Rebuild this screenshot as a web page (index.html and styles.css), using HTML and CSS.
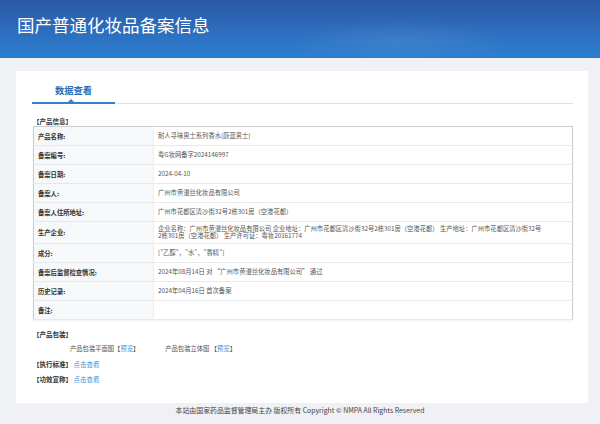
FILE: index.html
```html
<!DOCTYPE html>
<html lang="zh-CN">
<head>
    <meta charset="utf-8">
    <title>国产普通化妆品备案信息</title>
    <link rel="stylesheet" href="styles.css">
</head>
<body>
    <header class="top">
        <h1>国产普通化妆品备案信息</h1>
    </header>
    <main class="card">
        <div class="tabs">
            <span class="tab active">数据查看</span>
        </div>

        <div class="section-title">【产品信息】</div>
        <table class="info">
            <tr><th>产品名称:</th><td>耐人寻味男士系列香水(蔚蓝男士)</td></tr>
            <tr><th>备案编号:</th><td>粤G妆网备字2024146997</td></tr>
            <tr><th>备案日期:</th><td>2024-04-10</td></tr>
            <tr><th>备案人:</th><td>广州市黄漫丝化妆品有限公司</td></tr>
            <tr><th>备案人住所地址:</th><td>广州市花都区清沙街32号2栋301房（空港花都）</td></tr>
            <tr class="tall"><th>生产企业:</th><td>企业名称：广州市黄漫丝化妆品有限公司 企业地址：广州市花都区清沙街32号2栋301房（空港花都） 生产地址：广州市花都区清沙街32号2栋301房（空港花都） 生产许可证：粤妆20161774</td></tr>
            <tr><th>成分:</th><td>["乙醇"，"水"，"香精"]</td></tr>
            <tr><th>备案后监督检查情况:</th><td>2024年08月14日 对 “广州市黄漫丝化妆品有限公司” 通过</td></tr>
            <tr><th>历史记录:</th><td>2024年04月16日 首次备案</td></tr>
            <tr><th>备注:</th><td></td></tr>
        </table>

        <div class="section-title pack-title">【产品包装】</div>
        <div class="pack">
            <span>产品包装平面图【<a href="#">预览</a>】</span>
            <span>产品包装立体图 【<a href="#">预览</a>】</span>
        </div>
        <div class="line-item"><b>【执行标准】</b> <a href="#">点击查看</a></div>
        <div class="line-item"><b>【功效宣称】</b> <a href="#">点击查看</a></div>
    </main>
    <footer class="foot">本站由国家药品监督管理局主办 版权所有 Copyright © NMPA All Rights Reserved</footer>
</body>
</html>
```

FILE: styles.css
```css
body {
    margin: 0;
    background-color: #eff1f4;
    font-family: "Noto Sans CJK SC", "Noto Sans", sans-serif;
    color: #333;
}
a {
    color: #3a8fd8;
    text-decoration: none;
}

/* blue banner */
.top {
    height: 57px;
    border-bottom: 1px solid #2a78c8;
    background: radial-gradient(ellipse 160px 30px at 400px 40px, rgba(255,255,255,0.08), rgba(255,255,255,0) 70%),
                linear-gradient(#2b58a6, #2e7fd1);
}
.top h1 {
    margin: 0;
    padding-left: 17px;
    line-height: 50px;
    font-size: 17.5px;
    font-weight: normal;
    color: #fff;
}

/* white content card */
.card {
    margin: 13px 12px 0 16px;
    padding: 0 15px 0 17px;
    height: 332px;
    background-color: #fff;
    box-sizing: border-box;
}
.tabs {
    margin-left: -1px;
    padding-top: 13px;
    border-bottom: 1px solid #dde1e6;
    display: flex;
}
.tab {
    position: relative;
    width: 83px;
    padding-bottom: 6px;
    text-align: center;
    font-size: 9.3px;
    line-height: 12px;
    font-weight: bold;
    color: #2f6db3;
}
.tab.active {
    border-bottom: 2px solid #3b7fc2;
    margin-bottom: -1px;
}
.tab.active::after {
    content: "";
    position: absolute;
    left: 36px;
    bottom: 0;
    border: 3px solid transparent;
    border-bottom: 3px solid #3b7fc2;
    border-top: 0;
}

.section-title {
    margin-top: 12px;
    font-size: 6.5px;
    line-height: 10px;
    font-weight: bold;
}

/* product info table */
.info {
    width: 100%;
    border-collapse: collapse;
    border: 1px solid #c9cdd2;
    box-shadow: 0 1px 2px rgba(0,0,0,0.06);
    font-size: 6.3px;
}
.info tr {
    height: 19px;
    border-bottom: 1px solid #e6e8eb;
}
.info tr.tall {
    height: 22px;
}
.info th {
    width: 115px;
    padding: 0 0 0 4px;
    text-align: left;
    font-weight: bold;
    background-color: #f7f8f9;
    border-right: 1px solid #eceef0;
}
.info td {
    padding: 0 30px 0 4px;
    line-height: 6.5px;
    color: #555;
}

.pack-title {
    margin-top: 9px;
}
.pack {
    margin-top: 5px;
    padding-left: 37px;
    display: flex;
    gap: 26px;
    font-size: 6.3px;
    line-height: 10px;
    color: #555;
}
.line-item {
    margin-top: 5px;
    font-size: 6.5px;
    line-height: 10px;
}

.foot {
    padding-top: 2px;
    text-align: center;
    font-size: 6.9px;
    line-height: 10px;
    color: #444;
}
```
